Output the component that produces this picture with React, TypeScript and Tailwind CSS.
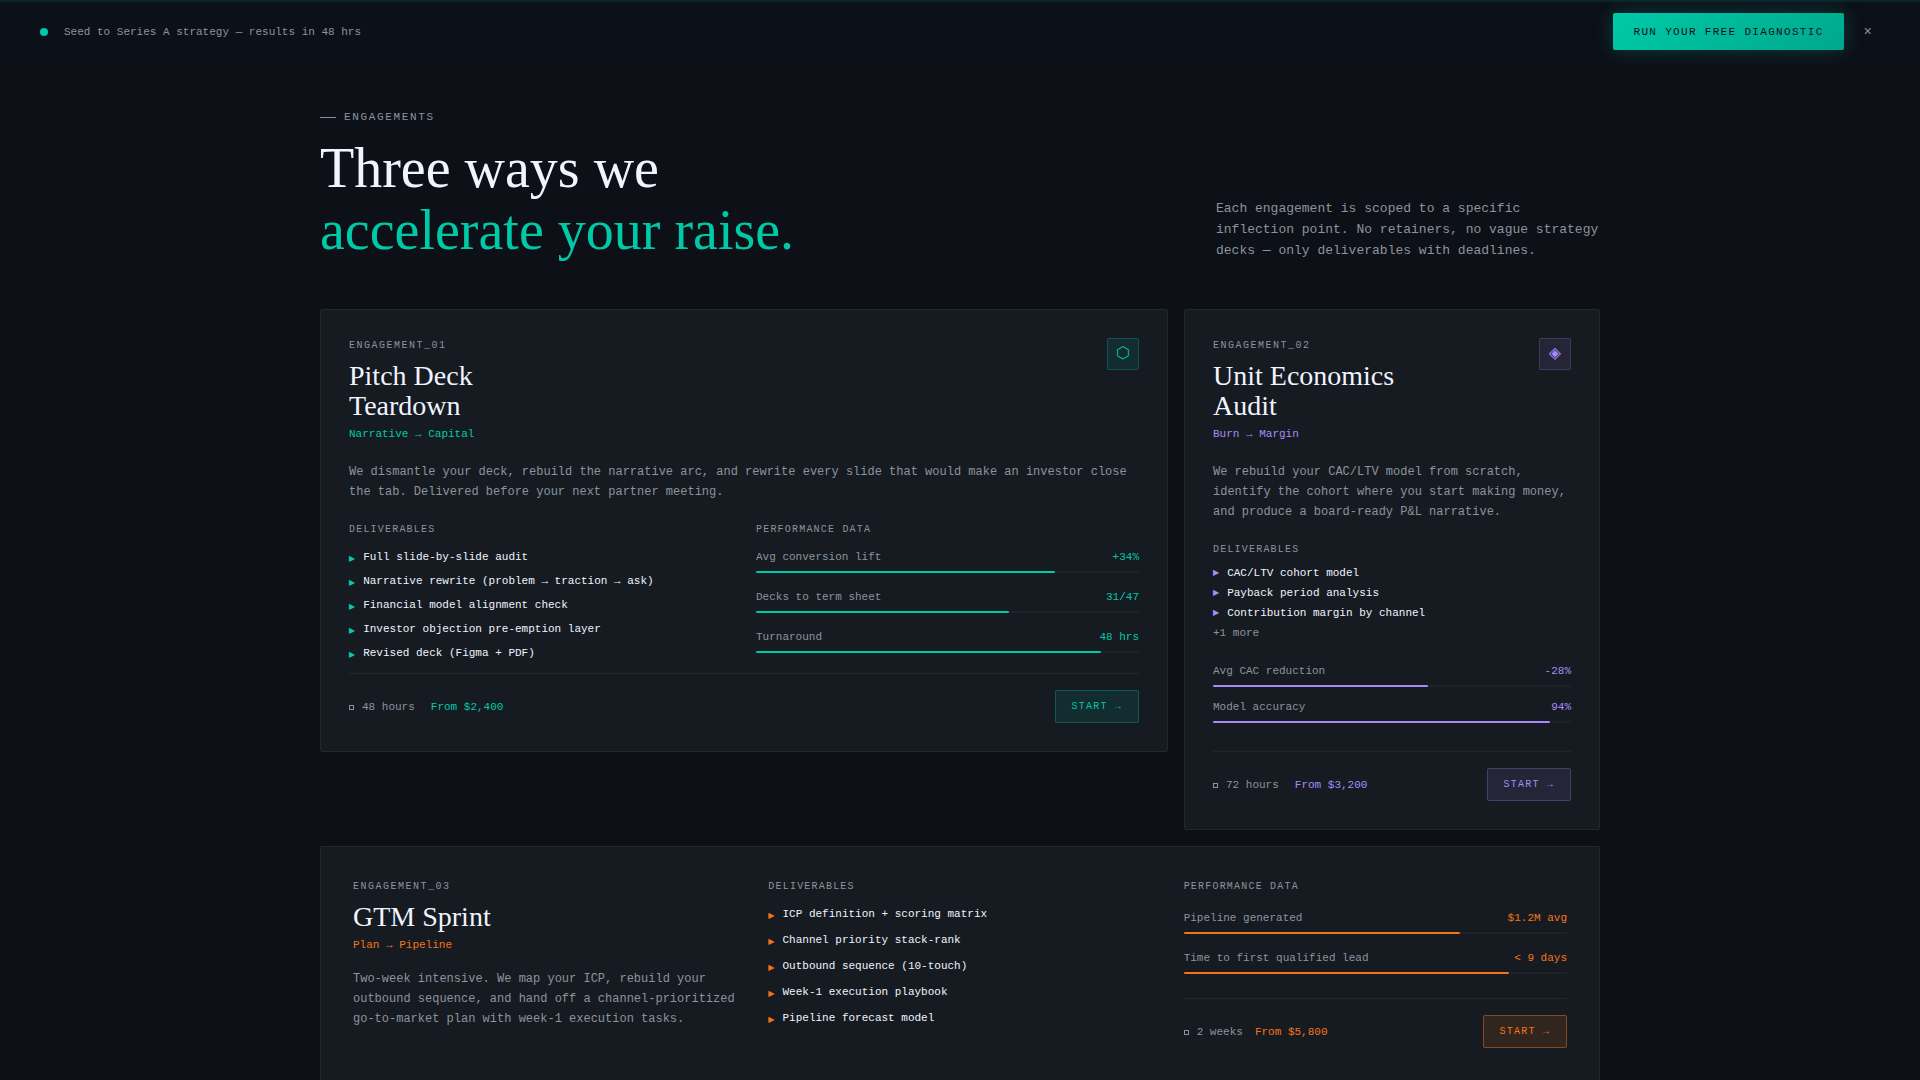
import React from "react";
import clsx from "clsx";

type Accent = "teal" | "violet" | "orange";

type Metric = { label: string; value: string; percent: number };

type Engagement = {
  id: string;
  title: string[];
  tagline: string;
  description: string;
  deliverables: string[];
  metrics: Metric[];
  turnaround: string;
  price: string;
  accent: Accent;
  glyph?: string;
};

const accents: Record<Accent, { text: string; bar: string; icon: string; button: string }> = {
  teal: {
    text: "text-[#00c9a7]",
    bar: "bg-[#00c9a7]",
    icon: "bg-[#00c9a7]/10 border-[#00c9a7]/25",
    button: "bg-[#00c9a7]/10 border-[#00c9a7]/30",
  },
  violet: {
    text: "text-[#a78bfa]",
    bar: "bg-[#a78bfa]",
    icon: "bg-[#a78bfa]/10 border-[#a78bfa]/20",
    button: "bg-[#a78bfa]/10 border-[#a78bfa]/25",
  },
  orange: {
    text: "text-[#f97316]",
    bar: "bg-[#f97316]",
    icon: "bg-[#f97316]/10 border-[#f97316]/30",
    button: "bg-[#f97316]/12 border-[#f97316]/45",
  },
};

const pitchDeck: Engagement = {
  id: "ENGAGEMENT_01",
  title: ["Pitch Deck", "Teardown"],
  tagline: "Narrative → Capital",
  description:
    "We dismantle your deck, rebuild the narrative arc, and rewrite every slide that would make an investor close the tab. Delivered before your next partner meeting.",
  deliverables: [
    "Full slide-by-slide audit",
    "Narrative rewrite (problem → traction → ask)",
    "Financial model alignment check",
    "Investor objection pre-emption layer",
    "Revised deck (Figma + PDF)",
  ],
  metrics: [
    { label: "Avg conversion lift", value: "+34%", percent: 78 },
    { label: "Decks to term sheet", value: "31/47", percent: 66 },
    { label: "Turnaround", value: "48 hrs", percent: 90 },
  ],
  turnaround: "48 hours",
  price: "From $2,400",
  accent: "teal",
  glyph: "⬡",
};

const unitEconomics: Engagement = {
  id: "ENGAGEMENT_02",
  title: ["Unit Economics", "Audit"],
  tagline: "Burn → Margin",
  description:
    "We rebuild your CAC/LTV model from scratch, identify the cohort where you start making money, and produce a board-ready P&L narrative.",
  deliverables: ["CAC/LTV cohort model", "Payback period analysis", "Contribution margin by channel"],
  metrics: [
    { label: "Avg CAC reduction", value: "-28%", percent: 60 },
    { label: "Model accuracy", value: "94%", percent: 94 },
  ],
  turnaround: "72 hours",
  price: "From $3,200",
  accent: "violet",
  glyph: "◈",
};

const gtmSprint: Engagement = {
  id: "ENGAGEMENT_03",
  title: ["GTM Sprint"],
  tagline: "Plan → Pipeline",
  description:
    "Two-week intensive. We map your ICP, rebuild your outbound sequence, and hand off a channel-prioritized go-to-market plan with week-1 execution tasks.",
  deliverables: [
    "ICP definition + scoring matrix",
    "Channel priority stack-rank",
    "Outbound sequence (10-touch)",
    "Week-1 execution playbook",
    "Pipeline forecast model",
  ],
  metrics: [
    { label: "Pipeline generated", value: "$1.2M avg", percent: 72 },
    { label: "Time to first qualified lead", value: "< 9 days", percent: 85 },
  ],
  turnaround: "2 weeks",
  price: "From $5,800",
  accent: "orange",
};

const App = () => {
  return (
    <div className="min-h-screen bg-[#0d1017] font-['Liberation_Mono',monospace] text-[11px] leading-4 text-[#8b949e]">
      <AnnouncementBar />
      <main className="mx-auto max-w-7xl pt-12 pb-24">
        <SectionHeader />
        <div className="grid grid-cols-3 items-start gap-4">
          <FeatureCard item={pitchDeck} />
          <CompactCard item={unitEconomics} />
          <WideCard item={gtmSprint} />
        </div>
      </main>
    </div>
  );
};
export default App;

const AnnouncementBar = () => {
  return (
    <header className="flex items-center justify-between border-t-2 border-[#0c2527] bg-[#0c1018] px-10 pt-[11px] pb-[11px]">
      <div className="flex items-center gap-4">
        <span className="size-2 rounded-full bg-[#00c9a7]" />
        <p>Seed to Series A strategy — results in 48 hrs</p>
      </div>
      <div className="flex items-center gap-3">
        <a
          href="#diagnostic"
          className="rounded-xs bg-linear-135 from-[#00c9a7] to-[#00a88c] px-5 pt-[11px] pb-2.5 tracking-[0.12em] text-[#0d1017] shadow-[0_0_20px_rgba(0,201,167,0.25)]"
        >
          RUN YOUR FREE DIAGNOSTIC
        </a>
        <button type="button" aria-label="Dismiss" className="px-2 text-sm">
          ×
        </button>
      </div>
    </header>
  );
};

const SectionHeader = () => {
  return (
    <div className="mb-12 flex items-end justify-between">
      <div>
        <div className="mb-3 flex items-center gap-2 tracking-[0.15em]">
          <span className="h-px w-4 bg-[#8b949e]" />
          ENGAGEMENTS
        </div>
        <h1 className="font-['Liberation_Serif',serif] text-[56px] leading-[62px] text-[#f0f4ff]">
          Three ways we
          <br />
          <span className="text-[#00c9a7]">accelerate your raise.</span>
        </h1>
      </div>
      <p className="w-96 text-[13px] leading-[21px]">
        Each engagement is scoped to a specific inflection point. No retainers, no vague strategy decks — only
        deliverables with deadlines.
      </p>
    </div>
  );
};

const Card = ({ className, children }: { className?: string; children: React.ReactNode }) => {
  return (
    <article className={clsx("rounded-xs border border-[#24272e] bg-[#161b22]", className)}>{children}</article>
  );
};

const CardHeading = ({ item }: { item: Engagement }) => {
  const accent = accents[item.accent];
  return (
    <div className="flex items-start justify-between">
      <div>
        <p className="mb-2 text-[10px] leading-[15px] tracking-[0.15em]">{item.id}</p>
        <h2 className="font-['Liberation_Serif',serif] text-[28px] leading-[30px] text-[#f0f4ff]">
          {item.title.map((line) => (
            <span key={line} className="block">
              {line}
            </span>
          ))}
        </h2>
        <p className={clsx("mt-[5px]", accent.text)}>{item.tagline}</p>
      </div>
      {item.glyph && (
        <span
          className={clsx(
            "flex size-8 items-center justify-center rounded-xs border pb-0.5 font-['DejaVu_Sans',sans-serif] text-base leading-6",
            accent.icon,
            accent.text,
          )}
        >
          {item.glyph}
        </span>
      )}
    </div>
  );
};

const Label = ({ className, children }: { className?: string; children: React.ReactNode }) => {
  return <h3 className={clsx("text-[10px] leading-[15px] tracking-[0.12em]", className)}>{children}</h3>;
};

const Deliverable = ({ accent, low, children }: { accent: Accent; low?: boolean; children: React.ReactNode }) => {
  return (
    <li className="flex items-start gap-2 text-[#f0f4ff]">
      <span
        className={clsx(
          "font-['DejaVu_Sans',sans-serif] text-[8px]",
          low ? "pt-1 leading-3" : "leading-4",
          accents[accent].text,
        )}
      >
        ▶
      </span>
      {children}
    </li>
  );
};

const Metrics = ({ item, className }: { item: Engagement; className?: string }) => {
  const accent = accents[item.accent];
  return (
    <div className={clsx("flex flex-col", className)}>
      {item.metrics.map((metric) => (
        <div key={metric.label}>
          <div className="flex justify-between">
            <span>{metric.label}</span>
            <span className={accent.text}>{metric.value}</span>
          </div>
          <div className="mt-1.5 h-0.5 rounded-full bg-[#1e2229]">
            <div className={clsx("h-full rounded-full", accent.bar)} style={{ width: `${metric.percent}%` }} />
          </div>
        </div>
      ))}
    </div>
  );
};

const CardFooter = ({ item, className, gap }: { item: Engagement; className?: string; gap: string }) => {
  const accent = accents[item.accent];
  return (
    <div className={clsx("flex items-center justify-between border-t border-[#22262d] pt-4", className)}>
      <div className={clsx("flex", gap)}>
        <span>
          <span className="mr-2 inline-block size-[5px] border border-current" />
          {item.turnaround}
        </span>
        <span className={accent.text}>{item.price}</span>
      </div>
      <button
        type="button"
        className={clsx(
          "rounded-xs border px-4 py-2 text-[10px] leading-[15px] tracking-[0.12em]",
          accent.button,
          accent.text,
        )}
      >
        START →
      </button>
    </div>
  );
};

const FeatureCard = ({ item }: { item: Engagement }) => {
  return (
    <Card className="col-span-2 p-7">
      <CardHeading item={item} />
      <p className="my-5 text-xs leading-5">{item.description}</p>
      <div className="grid grid-cols-2 gap-6">
        <div>
          <Label className="mb-3">DELIVERABLES</Label>
          <ul className="flex flex-col gap-2">
            {item.deliverables.map((text) => (
              <Deliverable key={text} accent={item.accent} low>
                {text}
              </Deliverable>
            ))}
          </ul>
        </div>
        <div>
          <Label className="mb-3">PERFORMANCE DATA</Label>
          <Metrics item={item} className="gap-4" />
        </div>
      </div>
      <CardFooter item={item} className="mt-3" gap="gap-4" />
    </Card>
  );
};

const CompactCard = ({ item }: { item: Engagement }) => {
  return (
    <Card className="p-7">
      <CardHeading item={item} />
      <p className="my-5 text-xs leading-5">{item.description}</p>
      <Label className="mb-2">DELIVERABLES</Label>
      <ul className="flex flex-col gap-1">
        {item.deliverables.map((text) => (
          <Deliverable key={text} accent={item.accent}>
            {text}
          </Deliverable>
        ))}
        <li>+1 more</li>
      </ul>
      <Metrics item={item} className="mt-[22px] gap-3" />
      <CardFooter item={item} className="mt-7" gap="gap-4" />
    </Card>
  );
};

const WideCard = ({ item }: { item: Engagement }) => {
  return (
    <Card className="col-span-3 grid grid-cols-3 gap-8 p-8">
      <div>
        <CardHeading item={item} />
        <p className="mt-4 text-xs leading-5">{item.description}</p>
      </div>
      <div>
        <Label className="mb-3">DELIVERABLES</Label>
        <ul className="flex flex-col gap-2.5">
          {item.deliverables.map((text) => (
            <Deliverable key={text} accent={item.accent} low>
              {text}
            </Deliverable>
          ))}
        </ul>
      </div>
      <div>
        <Label className="mb-4">PERFORMANCE DATA</Label>
        <Metrics item={item} className="gap-4" />
        <CardFooter item={item} className="mt-6" gap="gap-3" />
      </div>
    </Card>
  );
};
